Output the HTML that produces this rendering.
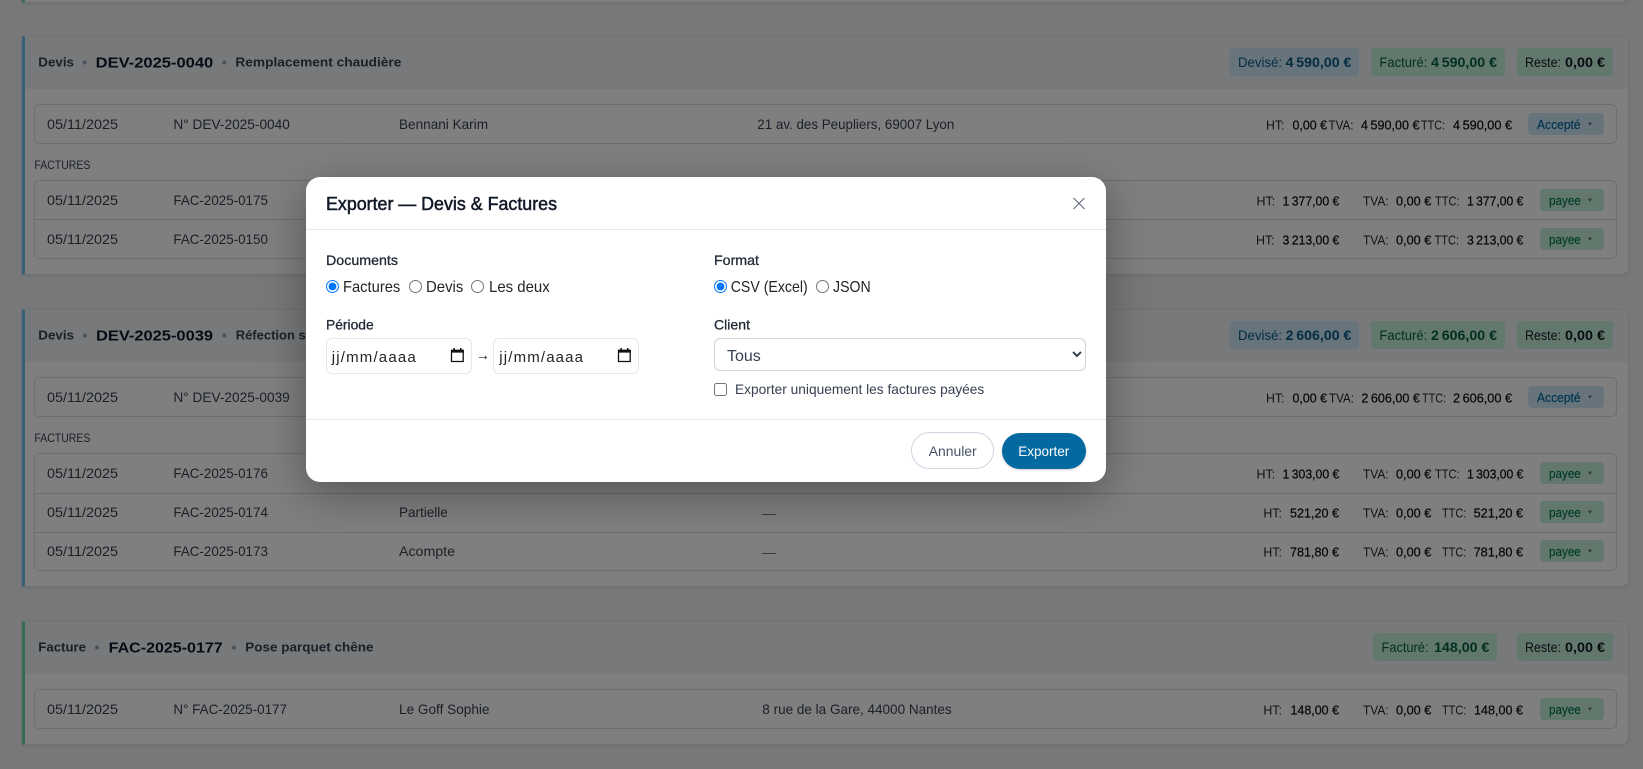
<!DOCTYPE html>
<html lang="fr"><head><meta charset="utf-8"><title>Exporter — Devis &amp; Factures</title>
<style>
html,body{margin:0;padding:0;width:1643px;height:769px;overflow:hidden;background:#f0f1f4;font-family:"Liberation Sans",sans-serif}
.a{position:absolute;box-sizing:border-box}
.card{left:22px;width:1607px;background:#fff;border:1px solid #e5e7eb;border-left:3.4px solid #70c0f0;border-radius:0 8px 8px 0;box-shadow:0 1px 3px rgba(0,0,0,.1);overflow:hidden}
.card.g{border-left-color:#6fd8a8}
.hd{left:0;top:0;right:0;height:52px;background:#eff3f7}
.row{left:34.4px;width:1582.4px;border:1px solid #dcdcdc;border-radius:5px}
.ln{left:35px;width:1581px;height:1px;background:#dcdcdc}
.chip{border-radius:4px;height:27.7px}
.b{background:#cfe8f8}.gc{background:#c6f0d8}
.pill{border-radius:4px;height:22px}
svg{position:absolute;left:0;top:0}
text{font-family:"Liberation Sans",sans-serif}
.t{font-size:14px;fill:#374151}
.s{font-size:13px;fill:#1f2328}
.v{font-size:13px;fill:#111;stroke:#111;stroke-width:.25}
.k{font-size:13px;font-weight:700;fill:#374151}
.n{font-size:15px;font-weight:700;fill:#0f172a}
.f{font-size:12px;fill:#374151}
.cl{font-size:14px}.cv{font-size:14px;font-weight:700}
.bl{fill:#075985}.gr{fill:#065f46}.bk{fill:#111827}
.pa{font-size:13px;fill:#0369a1;stroke:#0369a1;stroke-width:.2}
.pg{font-size:13px;fill:#047857;stroke:#047857;stroke-width:.2}
#ov{left:0;top:0;width:1643px;height:769px;background:rgba(0,0,0,.5)}
#modal{left:306px;top:177px;width:800px;height:305px;background:#fff;border-radius:14px;box-shadow:0 12px 44px rgba(0,0,0,.33)}
.m14{font-size:14px;fill:#1f2937;stroke:#1f2937;stroke-width:.3}
.m16{font-size:16px;fill:#212529}
input[type=radio],input[type=checkbox]{position:absolute;margin:0;width:13px;height:13px}
select{position:absolute;left:714px;top:338.4px;width:372px;height:32.4px;box-sizing:border-box;border:1px solid #ced4da;border-radius:6px;background:#fff;font:16px "Liberation Sans",sans-serif;color:#374151;padding:3px 0 0 8px}
.dt{top:338.4px;width:146px;height:35.4px;border:1px solid #e5e7eb;border-radius:6px;background:#fff}
</style></head><body>

<div class="a card g" style="top:-60px;height:62.5px"></div>

<div class="a card" style="top:35.7px;height:239.5px"><div class="a hd"></div></div>
<div class="a card" style="top:308.7px;height:278.5px"><div class="a hd"></div></div>
<div class="a card g" style="top:620.7px;height:124.5px"><div class="a hd"></div></div>

<div class="a row" style="top:104px;height:39.8px"></div>
<div class="a row" style="top:180.3px;height:78.6px"></div><div class="a ln" style="top:219px"></div>
<div class="a row" style="top:377px;height:39.8px"></div>
<div class="a row" style="top:453.3px;height:117.4px"></div><div class="a ln" style="top:492.5px"></div><div class="a ln" style="top:531.5px"></div>
<div class="a row" style="top:689.3px;height:39.6px"></div>

<div class="a chip b" style="left:1230px;top:48px;width:129px"></div>
<div class="a chip gc" style="left:1371px;top:48px;width:134px"></div>
<div class="a chip gc" style="left:1517px;top:48px;width:96px"></div>
<div class="a chip b" style="left:1230px;top:321.3px;width:129px"></div>
<div class="a chip gc" style="left:1371px;top:321.3px;width:134px"></div>
<div class="a chip gc" style="left:1517px;top:321.3px;width:96px"></div>
<div class="a chip gc" style="left:1373px;top:633.3px;width:124px"></div>
<div class="a chip gc" style="left:1517px;top:633.3px;width:96px"></div>

<div class="a pill b" style="left:1528px;top:113px;width:76px"></div>
<div class="a pill gc" style="left:1540px;top:189px;width:64px"></div>
<div class="a pill gc" style="left:1540px;top:228px;width:64px"></div>
<div class="a pill b" style="left:1528px;top:386px;width:76px"></div>
<div class="a pill gc" style="left:1540px;top:462px;width:64px"></div>
<div class="a pill gc" style="left:1540px;top:501px;width:64px"></div>
<div class="a pill gc" style="left:1540px;top:540px;width:64px"></div>
<div class="a pill gc" style="left:1540px;top:698px;width:64px"></div>

<svg width="1643" height="769" viewBox="0 0 1643 769">
<!-- card 1 header -->
<text class="k" x="38.3" y="66.5" textLength="35.7" lengthAdjust="spacingAndGlyphs">Devis</text>
<circle cx="84.6" cy="62.5" r="2" fill="#94a3b8"/>
<text class="n" x="95.7" y="67.5" textLength="117.5" lengthAdjust="spacingAndGlyphs">DEV-2025-0040</text>
<circle cx="224.3" cy="62.5" r="2" fill="#94a3b8"/>
<text class="k" x="235.4" y="66.5" textLength="166" lengthAdjust="spacingAndGlyphs">Remplacement chaudière</text>
<text class="cl bl" x="1238" y="67" textLength="44" lengthAdjust="spacingAndGlyphs">Devisé:</text>
<text class="cv bl" x="1285.6" y="67" textLength="65.8" lengthAdjust="spacingAndGlyphs">4&#8239;590,00 €</text>
<text class="cl gr" x="1379.4" y="67" textLength="47.8" lengthAdjust="spacingAndGlyphs">Facturé:</text>
<text class="cv gr" x="1431" y="67" textLength="66" lengthAdjust="spacingAndGlyphs">4&#8239;590,00 €</text>
<text class="cl bk" x="1525" y="67" textLength="36" lengthAdjust="spacingAndGlyphs">Reste:</text>
<text class="cv bk" x="1565" y="67" textLength="40" lengthAdjust="spacingAndGlyphs">0,00 €</text>
<!-- row DEV 40 -->
<text class="t" x="47" y="129" textLength="71" lengthAdjust="spacingAndGlyphs">05/11/2025</text>
<text class="t" x="173.4" y="129" textLength="116.5" lengthAdjust="spacingAndGlyphs">N° DEV-2025-0040</text>
<text class="t" x="399" y="129" textLength="89" lengthAdjust="spacingAndGlyphs">Bennani Karim</text>
<text class="t" x="757.3" y="129" textLength="197" lengthAdjust="spacingAndGlyphs">21 av. des Peupliers, 69007 Lyon</text>
<text class="s" x="1266" y="129.5" textLength="18.4" lengthAdjust="spacingAndGlyphs">HT:</text>
<text class="v" x="1292.5" y="129.5" textLength="34.5" lengthAdjust="spacingAndGlyphs">0,00 €</text>
<text class="s" x="1328.5" y="129.5" textLength="25" lengthAdjust="spacingAndGlyphs">TVA:</text>
<text class="v" x="1361" y="129.5" textLength="58.5" lengthAdjust="spacingAndGlyphs">4&#8239;590,00 €</text>
<text class="s" x="1421" y="129.5" textLength="24.2" lengthAdjust="spacingAndGlyphs">TTC:</text>
<text class="v" x="1453" y="129.5" textLength="59" lengthAdjust="spacingAndGlyphs">4&#8239;590,00 €</text>
<text class="pa" x="1537" y="129" textLength="43.6" lengthAdjust="spacingAndGlyphs">Accepté</text>
<polygon points="1588,122.6 1592,122.6 1590,125.6" fill="#5b6770"/>
<text class="f" x="34.4" y="169" textLength="56" lengthAdjust="spacingAndGlyphs">FACTURES</text>
<!-- 0175 -->
<text class="t" x="47" y="205" textLength="71" lengthAdjust="spacingAndGlyphs">05/11/2025</text>
<text class="t" x="173.4" y="205" textLength="94.5" lengthAdjust="spacingAndGlyphs">FAC-2025-0175</text>
<text class="s" x="1256.5" y="205.5" textLength="18.7" lengthAdjust="spacingAndGlyphs">HT:</text>
<text class="v" x="1282.5" y="205.5" textLength="56.8" lengthAdjust="spacingAndGlyphs">1&#8239;377,00 €</text>
<text class="s" x="1363" y="205.5" textLength="25.6" lengthAdjust="spacingAndGlyphs">TVA:</text>
<text class="v" x="1396" y="205.5" textLength="35.3" lengthAdjust="spacingAndGlyphs">0,00 €</text>
<text class="s" x="1435" y="205.5" textLength="24.6" lengthAdjust="spacingAndGlyphs">TTC:</text>
<text class="v" x="1467" y="205.5" textLength="56.4" lengthAdjust="spacingAndGlyphs">1&#8239;377,00 €</text>
<text class="pg" x="1549" y="205" textLength="31.8" lengthAdjust="spacingAndGlyphs">payee</text>
<polygon points="1588,198.6 1592,198.6 1590,201.6" fill="#5b6770"/>
<!-- 0150 -->
<text class="t" x="47" y="244" textLength="71" lengthAdjust="spacingAndGlyphs">05/11/2025</text>
<text class="t" x="173.4" y="244" textLength="94.5" lengthAdjust="spacingAndGlyphs">FAC-2025-0150</text>
<text class="s" x="1256" y="244.5" textLength="18.7" lengthAdjust="spacingAndGlyphs">HT:</text>
<text class="v" x="1282.5" y="244.5" textLength="56.8" lengthAdjust="spacingAndGlyphs">3&#8239;213,00 €</text>
<text class="s" x="1363" y="244.5" textLength="25.6" lengthAdjust="spacingAndGlyphs">TVA:</text>
<text class="v" x="1396" y="244.5" textLength="35.3" lengthAdjust="spacingAndGlyphs">0,00 €</text>
<text class="s" x="1434.5" y="244.5" textLength="24.6" lengthAdjust="spacingAndGlyphs">TTC:</text>
<text class="v" x="1467" y="244.5" textLength="56.4" lengthAdjust="spacingAndGlyphs">3&#8239;213,00 €</text>
<text class="pg" x="1549" y="244" textLength="31.8" lengthAdjust="spacingAndGlyphs">payee</text>
<polygon points="1588,237.6 1592,237.6 1590,240.6" fill="#5b6770"/>

<!-- card 2 header -->
<text class="k" x="38.3" y="339.5" textLength="35.7" lengthAdjust="spacingAndGlyphs">Devis</text>
<circle cx="85" cy="335.5" r="2" fill="#94a3b8"/>
<text class="n" x="96" y="340.5" textLength="117" lengthAdjust="spacingAndGlyphs">DEV-2025-0039</text>
<circle cx="224.3" cy="335.5" r="2" fill="#94a3b8"/>
<text class="k" x="235.7" y="339.5">Réfection s</text>
<text class="cl bl" x="1238" y="340" textLength="44" lengthAdjust="spacingAndGlyphs">Devisé:</text>
<text class="cv bl" x="1285.6" y="340" textLength="65.8" lengthAdjust="spacingAndGlyphs">2&#8239;606,00 €</text>
<text class="cl gr" x="1379.4" y="340" textLength="47.8" lengthAdjust="spacingAndGlyphs">Facturé:</text>
<text class="cv gr" x="1431" y="340" textLength="66" lengthAdjust="spacingAndGlyphs">2&#8239;606,00 €</text>
<text class="cl bk" x="1525" y="340" textLength="36" lengthAdjust="spacingAndGlyphs">Reste:</text>
<text class="cv bk" x="1565" y="340" textLength="40" lengthAdjust="spacingAndGlyphs">0,00 €</text>
<text class="t" x="47" y="402" textLength="71" lengthAdjust="spacingAndGlyphs">05/11/2025</text>
<text class="t" x="173.4" y="402" textLength="116.4" lengthAdjust="spacingAndGlyphs">N° DEV-2025-0039</text>
<text class="s" x="1266" y="402.5" textLength="18.4" lengthAdjust="spacingAndGlyphs">HT:</text>
<text class="v" x="1292.5" y="402.5" textLength="34.5" lengthAdjust="spacingAndGlyphs">0,00 €</text>
<text class="s" x="1329" y="402.5" textLength="25" lengthAdjust="spacingAndGlyphs">TVA:</text>
<text class="v" x="1361.4" y="402.5" textLength="58.5" lengthAdjust="spacingAndGlyphs">2&#8239;606,00 €</text>
<text class="s" x="1422" y="402.5" textLength="24.2" lengthAdjust="spacingAndGlyphs">TTC:</text>
<text class="v" x="1453" y="402.5" textLength="59" lengthAdjust="spacingAndGlyphs">2&#8239;606,00 €</text>
<text class="pa" x="1537" y="402" textLength="43.6" lengthAdjust="spacingAndGlyphs">Accepté</text>
<polygon points="1588,395.6 1592,395.6 1590,398.6" fill="#5b6770"/>
<text class="f" x="34.4" y="442" textLength="56" lengthAdjust="spacingAndGlyphs">FACTURES</text>
<!-- 0176 -->
<text class="t" x="47" y="478" textLength="71" lengthAdjust="spacingAndGlyphs">05/11/2025</text>
<text class="t" x="173.4" y="478" textLength="94.5" lengthAdjust="spacingAndGlyphs">FAC-2025-0176</text>
<text class="s" x="1256.5" y="478.5" textLength="18.7" lengthAdjust="spacingAndGlyphs">HT:</text>
<text class="v" x="1282.5" y="478.5" textLength="56.8" lengthAdjust="spacingAndGlyphs">1&#8239;303,00 €</text>
<text class="s" x="1363" y="478.5" textLength="25.6" lengthAdjust="spacingAndGlyphs">TVA:</text>
<text class="v" x="1396" y="478.5" textLength="35.3" lengthAdjust="spacingAndGlyphs">0,00 €</text>
<text class="s" x="1435" y="478.5" textLength="24.6" lengthAdjust="spacingAndGlyphs">TTC:</text>
<text class="v" x="1467" y="478.5" textLength="56.4" lengthAdjust="spacingAndGlyphs">1&#8239;303,00 €</text>
<text class="pg" x="1549" y="478" textLength="31.8" lengthAdjust="spacingAndGlyphs">payee</text>
<polygon points="1588,471.6 1592,471.6 1590,474.6" fill="#5b6770"/>
<!-- 0174 -->
<text class="t" x="47" y="517" textLength="71" lengthAdjust="spacingAndGlyphs">05/11/2025</text>
<text class="t" x="173.4" y="517" textLength="94.5" lengthAdjust="spacingAndGlyphs">FAC-2025-0174</text>
<text class="t" x="399" y="517" textLength="48.8" lengthAdjust="spacingAndGlyphs">Partielle</text>
<text class="t" x="762" y="518" textLength="14" lengthAdjust="spacingAndGlyphs" style="fill:#64748b">—</text>
<text class="s" x="1263.4" y="517.5" textLength="18.5" lengthAdjust="spacingAndGlyphs">HT:</text>
<text class="v" x="1290" y="517.5" textLength="49" lengthAdjust="spacingAndGlyphs">521,20 €</text>
<text class="s" x="1363" y="517.5" textLength="25.6" lengthAdjust="spacingAndGlyphs">TVA:</text>
<text class="v" x="1396" y="517.5" textLength="35.3" lengthAdjust="spacingAndGlyphs">0,00 €</text>
<text class="s" x="1442" y="517.5" textLength="24.3" lengthAdjust="spacingAndGlyphs">TTC:</text>
<text class="v" x="1473.6" y="517.5" textLength="49.5" lengthAdjust="spacingAndGlyphs">521,20 €</text>
<text class="pg" x="1549" y="517" textLength="31.8" lengthAdjust="spacingAndGlyphs">payee</text>
<polygon points="1588,510.6 1592,510.6 1590,513.6" fill="#5b6770"/>
<!-- 0173 -->
<text class="t" x="47" y="556" textLength="71" lengthAdjust="spacingAndGlyphs">05/11/2025</text>
<text class="t" x="173.4" y="556" textLength="94.5" lengthAdjust="spacingAndGlyphs">FAC-2025-0173</text>
<text class="t" x="399" y="556" textLength="56" lengthAdjust="spacingAndGlyphs">Acompte</text>
<text class="t" x="762" y="557" textLength="14" lengthAdjust="spacingAndGlyphs" style="fill:#64748b">—</text>
<text class="s" x="1263.4" y="556.5" textLength="18.5" lengthAdjust="spacingAndGlyphs">HT:</text>
<text class="v" x="1290" y="556.5" textLength="49" lengthAdjust="spacingAndGlyphs">781,80 €</text>
<text class="s" x="1363" y="556.5" textLength="25.6" lengthAdjust="spacingAndGlyphs">TVA:</text>
<text class="v" x="1396" y="556.5" textLength="35.3" lengthAdjust="spacingAndGlyphs">0,00 €</text>
<text class="s" x="1442" y="556.5" textLength="24.3" lengthAdjust="spacingAndGlyphs">TTC:</text>
<text class="v" x="1473.6" y="556.5" textLength="49.5" lengthAdjust="spacingAndGlyphs">781,80 €</text>
<text class="pg" x="1549" y="556" textLength="31.8" lengthAdjust="spacingAndGlyphs">payee</text>
<polygon points="1588,549.6 1592,549.6 1590,552.6" fill="#5b6770"/>

<!-- card 3 -->
<text class="k" x="38.3" y="651.5" textLength="47.7" lengthAdjust="spacingAndGlyphs">Facture</text>
<circle cx="97" cy="647.5" r="2" fill="#94a3b8"/>
<text class="n" x="108.7" y="652.5" textLength="114" lengthAdjust="spacingAndGlyphs">FAC-2025-0177</text>
<circle cx="233.8" cy="647.5" r="2" fill="#94a3b8"/>
<text class="k" x="245.3" y="651.5" textLength="128.2" lengthAdjust="spacingAndGlyphs">Pose parquet chêne</text>
<text class="cl gr" x="1381.5" y="652" textLength="47" lengthAdjust="spacingAndGlyphs">Facturé:</text>
<text class="cv gr" x="1434" y="652" textLength="55.4" lengthAdjust="spacingAndGlyphs">148,00 €</text>
<text class="cl bk" x="1525" y="652" textLength="36" lengthAdjust="spacingAndGlyphs">Reste:</text>
<text class="cv bk" x="1565" y="652" textLength="40" lengthAdjust="spacingAndGlyphs">0,00 €</text>
<text class="t" x="47" y="714" textLength="71" lengthAdjust="spacingAndGlyphs">05/11/2025</text>
<text class="t" x="173.4" y="714" textLength="113.6" lengthAdjust="spacingAndGlyphs">N° FAC-2025-0177</text>
<text class="t" x="399" y="714" textLength="90.5" lengthAdjust="spacingAndGlyphs">Le Goff Sophie</text>
<text class="t" x="762.3" y="714" textLength="189.4" lengthAdjust="spacingAndGlyphs">8 rue de la Gare, 44000 Nantes</text>
<text class="s" x="1263.4" y="714.5" textLength="18.5" lengthAdjust="spacingAndGlyphs">HT:</text>
<text class="v" x="1290.5" y="714.5" textLength="48.5" lengthAdjust="spacingAndGlyphs">148,00 €</text>
<text class="s" x="1363" y="714.5" textLength="25.6" lengthAdjust="spacingAndGlyphs">TVA:</text>
<text class="v" x="1396" y="714.5" textLength="35.3" lengthAdjust="spacingAndGlyphs">0,00 €</text>
<text class="s" x="1442" y="714.5" textLength="24.3" lengthAdjust="spacingAndGlyphs">TTC:</text>
<text class="v" x="1474" y="714.5" textLength="49" lengthAdjust="spacingAndGlyphs">148,00 €</text>
<text class="pg" x="1549" y="714" textLength="31.8" lengthAdjust="spacingAndGlyphs">payee</text>
<polygon points="1588,707.6 1592,707.6 1590,710.6" fill="#5b6770"/>
</svg>

<!-- backdrop -->
<div class="a" id="ov"></div>

<!-- modal -->
<div class="a" id="modal"></div>
<div class="a" style="left:306px;top:229px;width:800px;height:1px;background:#e5e7eb"></div>
<div class="a" style="left:306px;top:419px;width:800px;height:1px;background:#e5e7eb"></div>
<div class="a dt" style="left:326px"></div>
<div class="a dt" style="left:493.3px"></div>
<input type="radio" name="d" checked style="left:326px;top:280px">
<input type="radio" name="d" style="left:409px;top:280px">
<input type="radio" name="d" style="left:471px;top:280px">
<input type="radio" name="f" checked style="left:714px;top:280px">
<input type="radio" name="f" style="left:816px;top:280px">
<select><option>Tous</option></select>
<input type="checkbox" style="left:714px;top:383px">
<div class="a" style="left:911px;top:432.3px;width:83px;height:37px;border:1px solid #cbd5e1;border-radius:19px;background:#fff"></div>
<div class="a" style="left:1002px;top:433px;width:84px;height:36px;border-radius:18px;background:#0369a1;box-shadow:0 1px 2px rgba(0,0,0,.2)"></div>

<svg width="1643" height="769" viewBox="0 0 1643 769">
<text x="326" y="210" font-size="18" fill="#111827" stroke="#111827" stroke-width=".5" textLength="231" lengthAdjust="spacingAndGlyphs">Exporter — Devis &amp; Factures</text>
<path d="M1073.5 198l11 11M1084.5 198l-11 11" stroke="#6b7280" stroke-width="1.2" fill="none"/>
<text class="m14" x="326" y="265" textLength="72" lengthAdjust="spacingAndGlyphs">Documents</text>
<text class="m16" x="343" y="292" textLength="57.3" lengthAdjust="spacingAndGlyphs">Factures</text>
<text class="m16" x="426" y="292" textLength="37.3" lengthAdjust="spacingAndGlyphs">Devis</text>
<text class="m16" x="489" y="292" textLength="60.7" lengthAdjust="spacingAndGlyphs">Les deux</text>
<text class="m14" x="326" y="329.3" textLength="47.7" lengthAdjust="spacingAndGlyphs">Période</text>
<text class="m16" style="font-size:15px" x="331.7" y="362" textLength="84" lengthAdjust="spacing">jj/mm/aaaa</text>
<path d="M451.5 350.5h11.7v11h-11.7z" fill="none" stroke="#111" stroke-width="1.3"/><path d="M451 349.6h12.8v3H451zM453.4 348h1.5v2h-1.5zM460 348h1.5v2h-1.5z" fill="#111"/>
<text class="m16" x="475.7" y="360" textLength="14" lengthAdjust="spacingAndGlyphs">→</text>
<text class="m16" style="font-size:15px" x="499.3" y="362" textLength="83.7" lengthAdjust="spacing">jj/mm/aaaa</text>
<path d="M618.5 350.5h11.7v11h-11.7z" fill="none" stroke="#111" stroke-width="1.3"/><path d="M618 349.6h12.8v3H618zM620.4 348h1.5v2h-1.5zM627 348h1.5v2h-1.5z" fill="#111"/>
<text class="m14" x="714" y="265" textLength="45" lengthAdjust="spacingAndGlyphs">Format</text>
<text class="m16" x="730.7" y="292" textLength="77" lengthAdjust="spacingAndGlyphs">CSV (Excel)</text>
<text class="m16" x="833" y="292" textLength="37.7" lengthAdjust="spacingAndGlyphs">JSON</text>
<text class="m14" x="714" y="329.3" textLength="36" lengthAdjust="spacingAndGlyphs">Client</text>
<text x="735" y="394" font-size="14" fill="#374151" textLength="249.3" lengthAdjust="spacingAndGlyphs">Exporter uniquement les factures payées</text>
<text x="928.7" y="456" font-size="14" fill="#475569" textLength="48" lengthAdjust="spacingAndGlyphs">Annuler</text>
<text x="1018.3" y="456" font-size="14" fill="#fff" textLength="51" lengthAdjust="spacingAndGlyphs">Exporter</text>
</svg>
</body></html>
